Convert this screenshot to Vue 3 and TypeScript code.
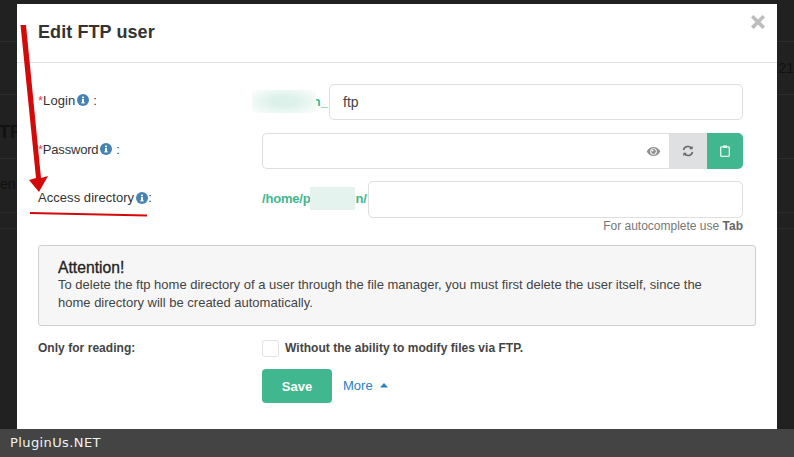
<script setup lang="ts">
const hint = "For autocomplete use";
</script>

<template>
  <div class="page">
    <div class="under">
      <div class="under-row r1"></div>
      <div class="under-row r2"><span class="side-r">s:21</span></div>
      <div class="under-row r3"><b>TP</b></div>
      <div class="under-row r4"><span>en</span></div>
      <div class="under-row r5"></div>
    </div>

    <div class="modal">
      <header class="head">
        <h2>Edit FTP user</h2>
        <svg class="close" viewBox="0 0 14 14" width="14" height="14"><path d="M2.500 2.500L11.500 11.500M11.500 2.500L2.500 11.500" stroke="#bdbdbd" stroke-width="3.600" stroke-linecap="square" fill="none"/></svg>
      </header>
      <div class="body">
        <div class="row login-row">
          <label class="lbl"><i>*</i>Login<svg class="info" viewBox="0 0 12 12"><circle cx="6" cy="6" r="6" fill="#4682b4"/><rect x="5" y="5" width="2" height="4" fill="#fff"/><rect x="5" y="2.6" width="2" height="1.6" fill="#fff"/><rect x="4.2" y="8.4" width="3.6" height="1" fill="#fff"/></svg><span class="colon-sp">:</span></label>
          <div class="ctl">
            <span class="prefix login-pre"><span class="blur b1"></span>n_</span>
            <div class="input grow ftp">ftp</div>
          </div>
        </div>
        <div class="row pass-row">
          <label class="lbl pw"><i>*</i>Password<svg class="info" viewBox="0 0 12 12"><circle cx="6" cy="6" r="6" fill="#4682b4"/><rect x="5" y="5" width="2" height="4" fill="#fff"/><rect x="5" y="2.6" width="2" height="1.6" fill="#fff"/><rect x="4.2" y="8.4" width="3.6" height="1" fill="#fff"/></svg><span class="colon-sp">:</span></label>
          <div class="ctl">
            <div class="input grow pass">
              <svg class="eye" viewBox="0 0 16 12"><path d="M0.6 6C2.4 2.6 5 1 8 1s5.6 1.6 7.4 5C13.6 9.4 11 11 8 11S2.4 9.4.6 6z" fill="#8f8f8f"/><circle cx="8" cy="6" r="3.6" fill="#fff"/><circle cx="8" cy="6" r="2.6" fill="#8f8f8f"/><circle cx="6.9" cy="5" r="1" fill="#fff"/></svg>
            </div>
            <button class="btn-ref" type="button">
              <svg viewBox="0 0 12 12" width="12" height="12" fill="none" stroke="#666" stroke-width="1.5"><path d="M1.5 5A4.6 4.6 0 0 1 9.6 3.2"/><path d="M10.5 7A4.6 4.6 0 0 1 2.4 8.8"/><path d="M10.6 0.8v3.4H7.2z" fill="#666" stroke="none"/><path d="M1.4 11.2V7.8h3.4z" fill="#666" stroke="none"/></svg>
            </button>
            <button class="btn-clip" type="button">
              <svg viewBox="0 0 10 12" width="10" height="12"><path d="M1.4 1.8h7.2c.4 0 .7.3.7.7v8.1c0 .4-.3.7-.7.7H1.400c-.4 0-.7-.3-.7-.7V2.500c0-.4.3-.7.7-.7z" fill="none" stroke="#e6f5ef" stroke-width="1.3"/><rect x="3" y="0.400" width="4" height="2.600" fill="#e6f5ef"/></svg>
            </button>
          </div>
        </div>
        <div class="row access-row">
          <label class="lbl"><span class="tx">Access directory</span><svg class="info" viewBox="0 0 12 12"><circle cx="6" cy="6" r="6" fill="#4682b4"/><rect x="5" y="5" width="2" height="4" fill="#fff"/><rect x="5" y="2.6" width="2" height="1.6" fill="#fff"/><rect x="4.2" y="8.4" width="3.6" height="1" fill="#fff"/></svg>:</label>
          <div class="ctl">
            <span class="prefix home">/home/p<span class="blur b2"></span>n/</span>
            <div class="input grow"></div>
          </div>
        </div>
        <div class="hint">{{ hint }} <b>Tab</b></div>
        <div class="notice">
          <strong>Attention!</strong>
          <p>To delete the ftp home directory of a user through the file manager, you must first delete the user itself, since the home directory will be created automatically.</p>
        </div>
        <div class="row read-row">
          <label class="lbl bold">Only for reading:</label>
          <div class="ctl check">
            <span class="box"></span>
            <span class="check-text">Without the ability to modify files via FTP.</span>
          </div>
        </div>
        <div class="row act-row">
          <span class="lbl"></span>
          <div class="ctl">
            <button class="save" type="button">Save</button>
            <a class="more">More<svg viewBox="0 0 8 5" width="8" height="5"><path d="M4 0l4 4.600H0z" fill="#2a7fc1"/></svg></a>
          </div>
        </div>
      </div>
    </div>

    <svg class="annot" width="794" height="457" viewBox="0 0 794 457">
      <path d="M20.500 25 L26 25 L41 178 L48 176 L39 192 L29 180 L36 178 Z" fill="#d40a0a"/>
      <path d="M30 212 L147 214.500 L147 216.500 L30 214 Z" fill="#d40a0a"/>
    </svg>

    <footer class="bar">PluginUs.NET</footer>
  </div>
</template>

<style>
html, body { margin: 0; background: #222; }
</style>

<style scoped>
.page {
  position: relative;
  width: 794px;
  height: 457px;
  overflow: hidden;
  background: #212121;
  font-family: "Liberation Sans", Arial, sans-serif;
  color: #333;
}
.under { position: absolute; inset: 0; }
.under-row { position: absolute; left: 0; right: 0; border-bottom: 1px solid #2c2c2c; color: #111; font-size: 14px; }
.r1 { top: 0; height: 41px; }
.r2 { top: 41px; height: 53px; }
.r3 { top: 94px; height: 64px; font-size: 18px; }
.r3 b { position: absolute; left: -1px; top: 28px; }
.r4 { top: 158px; height: 54px; }
.r4 span { position: absolute; left: 0; top: 18px; }
.r5 { top: 212px; height: 16px; }
.side-r { position: absolute; right: 0; top: 19px; }

.modal {
  position: absolute;
  left: 17px;
  top: 4px;
  width: 760px;
  height: 425px;
  background: #fff;
}
.head {
  height: 58px;
  border-bottom: 1px solid #e2e2e2;
  display: flex;
  align-items: center;
  padding-left: 21px;
  position: relative;
}
h2 { margin: 0; font-size: 18px; line-height: 24px; font-weight: 700; letter-spacing: 0.08px; color: #333; position: relative; top: -1px; }
.close { position: absolute; right: 12px; top: 11px; }
.body { padding: 21px 21px 0; }
.row { display: flex; align-items: stretch; }
.lbl { width: 224px; flex: none; font-size: 13px; letter-spacing: 0.05px; color: #333; display: flex; align-items: center; position: relative; top: -2px; }
.lbl i { color: #e6474d; font-style: normal; }
.lbl.pw { letter-spacing: -0.2px; }
.info { width: 12px; height: 12px; margin-left: 2px; }
.colon-sp { margin-left: 4px; }
.ctl { flex: 1; display: flex; align-items: stretch; min-width: 0; margin-right: 13px; }
.login-row { height: 36px; }
.pass-row { height: 36px; margin-top: 13px; }
.access-row { height: 37px; margin-top: 12px; }
.prefix { display: flex; align-items: center; font-size: 13px; font-weight: 700; color: #41b78f; position: relative; top: -1px; }
.login-pre { width: 67px; flex: none; justify-content: flex-end; box-sizing: border-box; padding-right: 1px; }
.home { width: 106px; flex: none; box-sizing: border-box; justify-content: flex-start; letter-spacing: -0.2px; }
.blur { display: inline-block; flex: none; position: relative; z-index: 1; }
.b1 {
  width: 64px;
  height: 23px;
  background: radial-gradient(ellipse 40px 16px at 50% 50%, #dcf1e9 30%, #f3faf7 85%, #fbfdfc 100%);
  margin-right: -3px;
  margin-left: -10px;
}
.b2 { width: 45px; height: 23px; background: #e4f3ee; }
.input {
  border: 1px solid #dedede;
  border-radius: 5px;
  box-sizing: border-box;
  background: #fff;
  font-size: 14px;
  color: #444;
  display: flex;
  align-items: center;
}
.grow { flex: 1; min-width: 0; }
.ftp { padding-left: 13px; }
.pass { justify-content: flex-end; padding-right: 8px; border-right: none; border-radius: 5px 0 0 5px; }
.eye { width: 15px; height: 11px; }
.btn-ref, .btn-clip { border: none; padding: 0; display: flex; align-items: center; justify-content: center; }
.btn-ref { background: #dfe0e2; width: 38px; }
.btn-clip { background: #41b78f; width: 36px; border-radius: 0 5px 5px 0; }
.hint { margin-top: 1px; text-align: right; font-size: 12px; line-height: 15px; color: #777; margin-right: 13px; }
.hint b { color: #666; }
.notice {
  margin-top: 11px;
  height: 81px;
  box-sizing: border-box;
  border: 1px solid #cfcfcf;
  border-radius: 3px;
  background: #f6f6f6;
  padding: 13px 40px 12px 19px;
  font-size: 13px;
  color: #444;
}
.notice strong { display: block; font-size: 15.700px; font-weight: 400; color: #222; line-height: 17px; -webkit-text-stroke: 0.3px #222; }
.notice p { margin: 0; line-height: 18px; letter-spacing: 0; }
.read-row { margin-top: 13px; height: 18px; }
.bold, .check-text { font-weight: 700; font-size: 12px; letter-spacing: 0.04px; color: #444; }
.lbl.bold { top: 0; }
.check { align-items: center; gap: 6px; }
.box { width: 17px; height: 17px; box-sizing: border-box; border: 1px solid #e2e2e2; border-radius: 3px; background: #fff; }
.act-row { margin-top: 12px; height: 34px; }
.act-row .ctl { align-items: center; }
.save {
  width: 70px;
  height: 34px;
  border: none;
  border-radius: 4px;
  background: #41b78f;
  color: #fff;
  font: 700 13px "Liberation Sans", Arial, sans-serif;
}
.more { margin-left: 11px; font-size: 13px; color: #2a7fc1; display: flex; align-items: center; gap: 7px; position: relative; top: -1px; }
.annot { position: absolute; left: 0; top: 0; pointer-events: none; }
.bar {
  position: absolute;
  left: 0;
  right: 0;
  bottom: 0;
  height: 28px;
  background: #444;
  color: #f2f2f2;
  font: 13px/28px "DejaVu Sans", sans-serif;
  letter-spacing: 0.4px;
  padding-left: 10px;
}
</style>
